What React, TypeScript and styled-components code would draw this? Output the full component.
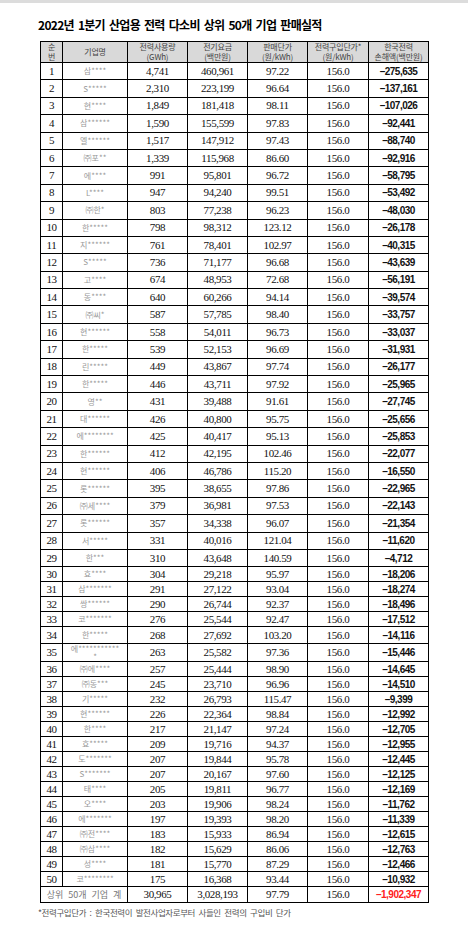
import styled, { createGlobalStyle } from "styled-components";

const GlobalStyle = createGlobalStyle`
  html, body {
    margin: 0;
    padding: 0;
    background: #ffffff;
  }
  body {
    font-family: "Noto Sans CJK KR", "Noto Sans", sans-serif;
  }
`;

type Row = [number, string, string, string, string, string];

const rows: Row[] = [
  [1, "삼****", "4,741", "460,961", "97.22", "–275,635"],
  [2, "S*****", "2,310", "223,199", "96.64", "–137,161"],
  [3, "현****", "1,849", "181,418", "98.11", "–107,026"],
  [4, "삼******", "1,590", "155,599", "97.83", "–92,441"],
  [5, "엘******", "1,517", "147,912", "97.43", "–88,740"],
  [6, "㈜포**", "1,339", "115,968", "86.60", "–92,916"],
  [7, "에****", "991", "95,801", "96.72", "–58,795"],
  [8, "L****", "947", "94,240", "99.51", "–53,492"],
  [9, "㈜한*", "803", "77,238", "96.23", "–48,030"],
  [10, "한*****", "798", "98,312", "123.12", "–26,178"],
  [11, "지******", "761", "78,401", "102.97", "–40,315"],
  [12, "S*****", "736", "71,177", "96.68", "–43,639"],
  [13, "고****", "674", "48,953", "72.68", "–56,191"],
  [14, "동****", "640", "60,266", "94.14", "–39,574"],
  [15, "㈜씨*", "587", "57,785", "98.40", "–33,757"],
  [16, "현******", "558", "54,011", "96.73", "–33,037"],
  [17, "한*****", "539", "52,153", "96.69", "–31,931"],
  [18, "린*****", "449", "43,867", "97.74", "–26,177"],
  [19, "한*****", "446", "43,711", "97.92", "–25,965"],
  [20, "영**", "431", "39,488", "91.61", "–27,745"],
  [21, "대******", "426", "40,800", "95.75", "–25,656"],
  [22, "에********", "425", "40,417", "95.13", "–25,853"],
  [23, "한******", "412", "42,195", "102.46", "–22,077"],
  [24, "현******", "406", "46,786", "115.20", "–16,550"],
  [25, "롯******", "395", "38,655", "97.86", "–22,965"],
  [26, "㈜세****", "379", "36,981", "97.53", "–22,143"],
  [27, "롯******", "357", "34,338", "96.07", "–21,354"],
  [28, "서*****", "331", "40,016", "121.04", "–11,620"],
  [29, "한***", "310", "43,648", "140.59", "–4,712"],
  [30, "효****", "304", "29,218", "95.97", "–18,206"],
  [31, "삼*******", "291", "27,122", "93.04", "–18,274"],
  [32, "쌍******", "290", "26,744", "92.37", "–18,496"],
  [33, "코*******", "276", "25,544", "92.47", "–17,512"],
  [34, "한*****", "268", "27,692", "103.20", "–14,116"],
  [35, "에************", "263", "25,582", "97.36", "–15,446"],
  [36, "㈜에****", "257", "25,444", "98.90", "–14,645"],
  [37, "㈜동***", "245", "23,710", "96.96", "–14,510"],
  [38, "기*****", "232", "26,793", "115.47", "–9,399"],
  [39, "현******", "226", "22,364", "98.84", "–12,992"],
  [40, "한****", "217", "21,147", "97.24", "–12,705"],
  [41, "효*****", "209", "19,716", "94.37", "–12,955"],
  [42, "도*******", "207", "19,844", "95.78", "–12,445"],
  [43, "S*******", "207", "20,167", "97.60", "–12,125"],
  [44, "태****", "205", "19,811", "96.77", "–12,169"],
  [45, "오****", "203", "19,906", "98.24", "–11,762"],
  [46, "에*******", "197", "19,393", "98.20", "–11,339"],
  [47, "㈜전****", "183", "15,933", "86.94", "–12,615"],
  [48, "㈜삼****", "182", "15,629", "86.06", "–12,763"],
  [49, "성****", "181", "15,770", "87.29", "–12,466"],
  [50, "코********", "175", "16,368", "93.44", "–10,932"],
];

const rowHeight = (n: number) => {
  if (n <= 29) return 17.4;
  if (n === 34) return 16.7;
  if (n === 35) return 18.3;
  return 15;
};

const TopBar = styled.div`
  height: 3px;
  background: #dcdcdc;
`;

const Page = styled.div`
  padding: 15px 0 0 40px;
`;

const Title = styled.h1`
  margin: 0 0 0 -2px;
  height: 23px;
  font-family: "Noto Sans CJK KR", sans-serif;
  font-size: 12px;
  font-weight: 700;
  letter-spacing: -0.7px;
  word-spacing: 2px;
  line-height: 14px;
  color: #000;
`;

const Table = styled.table`
  width: 388px;
  table-layout: fixed;
  border-collapse: collapse;
  border: 1px solid #000;
`;

const HeadCell = styled.th`
  height: 20px;
  padding: 0;
  background: #d9d9d9;
  border: 1px solid #000;
  font-family: "Noto Sans CJK KR", sans-serif;
  font-size: 8px;
  font-weight: 400;
  line-height: 10px;
  color: #444;
  text-align: center;
  vertical-align: middle;
  letter-spacing: -0.2px;
`;

const HeadLine = styled.div`
  height: 10px;
  overflow: visible;
  white-space: nowrap;
`;

const Tr = styled.tr<{ $h: number }>`
  height: ${({ $h }) => $h}px;
`;

const Cell = styled.td`
  padding: 0;
  border: 1px solid #000;
  font-family: "Liberation Serif", "Noto Sans CJK KR", serif;
  font-size: 11px;
  line-height: 11px;
  color: #111;
  text-align: center;
  vertical-align: middle;
  letter-spacing: -0.4px;
`;

const NameCell = styled(Cell)`
  font-family: "Noto Sans CJK KR", sans-serif;
  font-size: 8px;
  line-height: 8px;
  color: #999;
  word-break: break-all;
  padding: 0 6px;
  letter-spacing: 0;
`;

const LabelCell = styled(Cell)`
  font-family: "Noto Sans CJK KR", sans-serif;
  font-size: 9px;
  color: #777;
  word-spacing: 3px;
  letter-spacing: 0;
`;

const LossCell = styled(Cell)<{ $red?: boolean }>`
  font-family: "Liberation Sans", "Noto Sans", sans-serif;
  font-weight: 700;
  font-size: 10px;
  letter-spacing: -0.5px;
  color: ${({ $red }) => ($red ? "#ff2020" : "#111")};
`;

const Note = styled.p`
  margin: 4px 0 0 -2px;
  font-family: "Noto Sans CJK KR", sans-serif;
  font-size: 8.5px;
  line-height: 11px;
  color: #555;
  letter-spacing: -0.4px;
  word-spacing: 2px;
`;

const heads: [string, string?][] = [
  ["순", "번"],
  ["기업명"],
  ["전력사용량", "(GWh)"],
  ["전기요금", "(백만원)"],
  ["판매단가", "(원/kWh)"],
  ["전력구입단가*", "(원/kWh)"],
  ["한국전력", "손해액(백만원)"],
];

export default function App() {
  return (
    <>
      <GlobalStyle />
      <TopBar />
      <Page>
        <Title>2022년 1분기 산업용 전력 다소비 상위 50개 기업 판매실적</Title>
        <Table>
          <colgroup>
            <col style={{ width: 22 }} />
            <col style={{ width: 65 }} />
            <col style={{ width: 60 }} />
            <col style={{ width: 60 }} />
            <col style={{ width: 60 }} />
            <col style={{ width: 61 }} />
            <col style={{ width: 60 }} />
          </colgroup>
          <thead>
            <tr>
              {heads.map(([a, b]) => (
                <HeadCell key={a}>
                  <HeadLine>{a}</HeadLine>
                  {b && <HeadLine>{b}</HeadLine>}
                </HeadCell>
              ))}
            </tr>
          </thead>
          <tbody>
            {rows.map(([n, name, use, fee, price, loss]) => (
              <Tr key={n} $h={rowHeight(n)}>
                <Cell>{n}</Cell>
                <NameCell>{name}</NameCell>
                <Cell>{use}</Cell>
                <Cell>{fee}</Cell>
                <Cell>{price}</Cell>
                <Cell>156.0</Cell>
                <LossCell>{loss}</LossCell>
              </Tr>
            ))}
            <Tr $h={15.3}>
              <LabelCell colSpan={2}>상위 50개 기업 계</LabelCell>
              <Cell>30,965</Cell>
              <Cell>3,028,193</Cell>
              <Cell>97.79</Cell>
              <Cell>156.0</Cell>
              <LossCell $red>–1,902,347</LossCell>
            </Tr>
          </tbody>
        </Table>
        <Note>*전력구입단가 : 한국전력이 발전사업자로부터 사들인 전력의 구입비 단가</Note>
      </Page>
    </>
  );
}
